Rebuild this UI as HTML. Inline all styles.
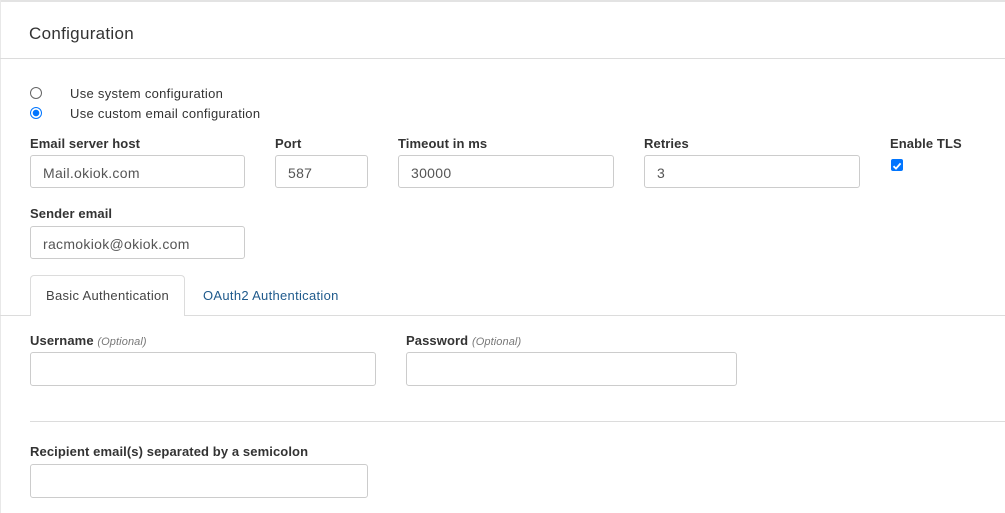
<!DOCTYPE html>
<html><head><style>
body{margin:0;width:1005px;height:513px;background:#fff;font-family:"Liberation Sans",sans-serif;color:#212529;position:relative;overflow:hidden;letter-spacing:0.3px}
.a{position:absolute}
.lbl{position:absolute;font-size:13px;font-weight:bold;color:#333;letter-spacing:0.1px}
.lbl i{font-weight:normal;font-size:11px;color:#777}
.in{position:absolute;border:1px solid #ccc;border-radius:3px;box-sizing:border-box;font-size:14px;color:#555;padding-left:12px;line-height:34px}
.rad{position:absolute;width:12px;height:12px;border-radius:50%;box-sizing:border-box}
</style></head><body>
<div class="a" style="left:0;top:0;width:1005px;height:2px;background:#e3e3e3"></div>
<div class="a" style="left:0;top:0;width:1px;height:513px;background:#e8e8e8"></div>
<div class="a" style="left:29px;top:24px;font-size:17px;color:#333">Configuration</div>
<div class="a" style="left:0;top:58px;width:1005px;height:1px;background:#dcdcdc"></div>
<div class="rad" style="left:30px;top:87px;border:1px solid #666"></div>
<div class="rad" style="left:30px;top:107px;border:1px solid #0075ff;background:radial-gradient(#0075ff 0 3px,#fff 3.5px)"></div>
<div class="a" style="left:70px;top:86px;font-size:13px;color:#333">Use system configuration</div>
<div class="a" style="left:70px;top:106px;font-size:13px;color:#333">Use custom email configuration</div>
<div class="lbl" style="left:30px;top:136px">Email server host</div>
<div class="lbl" style="left:275px;top:136px">Port</div>
<div class="lbl" style="left:398px;top:136px">Timeout in ms</div>
<div class="lbl" style="left:644px;top:136px">Retries</div>
<div class="lbl" style="left:890px;top:136px">Enable TLS</div>
<div class="in" style="left:30px;top:155px;width:215px;height:33px">Mail.okiok.com</div>
<div class="in" style="left:275px;top:155px;width:93px;height:33px">587</div>
<div class="in" style="left:398px;top:155px;width:216px;height:33px">30000</div>
<div class="in" style="left:644px;top:155px;width:216px;height:33px">3</div>
<div class="a" style="left:891px;top:159px;width:12px;height:12px;background:#0075ff;border-radius:2px"><svg width="12" height="12"><path d="M2.5 6.2 L5 8.6 L9.6 3.4" stroke="#fff" stroke-width="1.8" fill="none"/></svg></div>
<div class="lbl" style="left:30px;top:206px">Sender email</div>
<div class="in" style="left:30px;top:226px;width:215px;height:33px">racmokiok@okiok.com</div>
<div class="a" style="left:0;top:315px;width:1005px;height:1px;background:#dcdcdc"></div>
<div class="a" style="left:30px;top:275px;width:155px;height:41px;box-sizing:border-box;border:1px solid #dcdcdc;border-bottom:none;border-radius:4px 4px 0 0;background:#fff"></div>
<div class="a" style="left:46px;top:288px;font-size:13px;color:#444">Basic Authentication</div>
<div class="a" style="left:203px;top:288px;font-size:13px;color:#1f5a8c">OAuth2 Authentication</div>
<div class="lbl" style="left:30px;top:333px">Username <i>(Optional)</i></div>
<div class="lbl" style="left:406px;top:333px">Password <i>(Optional)</i></div>
<div class="in" style="left:30px;top:352px;width:346px;height:34px"></div>
<div class="in" style="left:406px;top:352px;width:331px;height:34px"></div>
<div class="a" style="left:30px;top:421px;width:975px;height:1px;background:#dcdcdc"></div>
<div class="lbl" style="left:30px;top:444px">Recipient email(s) separated by a semicolon</div>
<div class="in" style="left:30px;top:464px;width:338px;height:34px"></div>
</body></html>
